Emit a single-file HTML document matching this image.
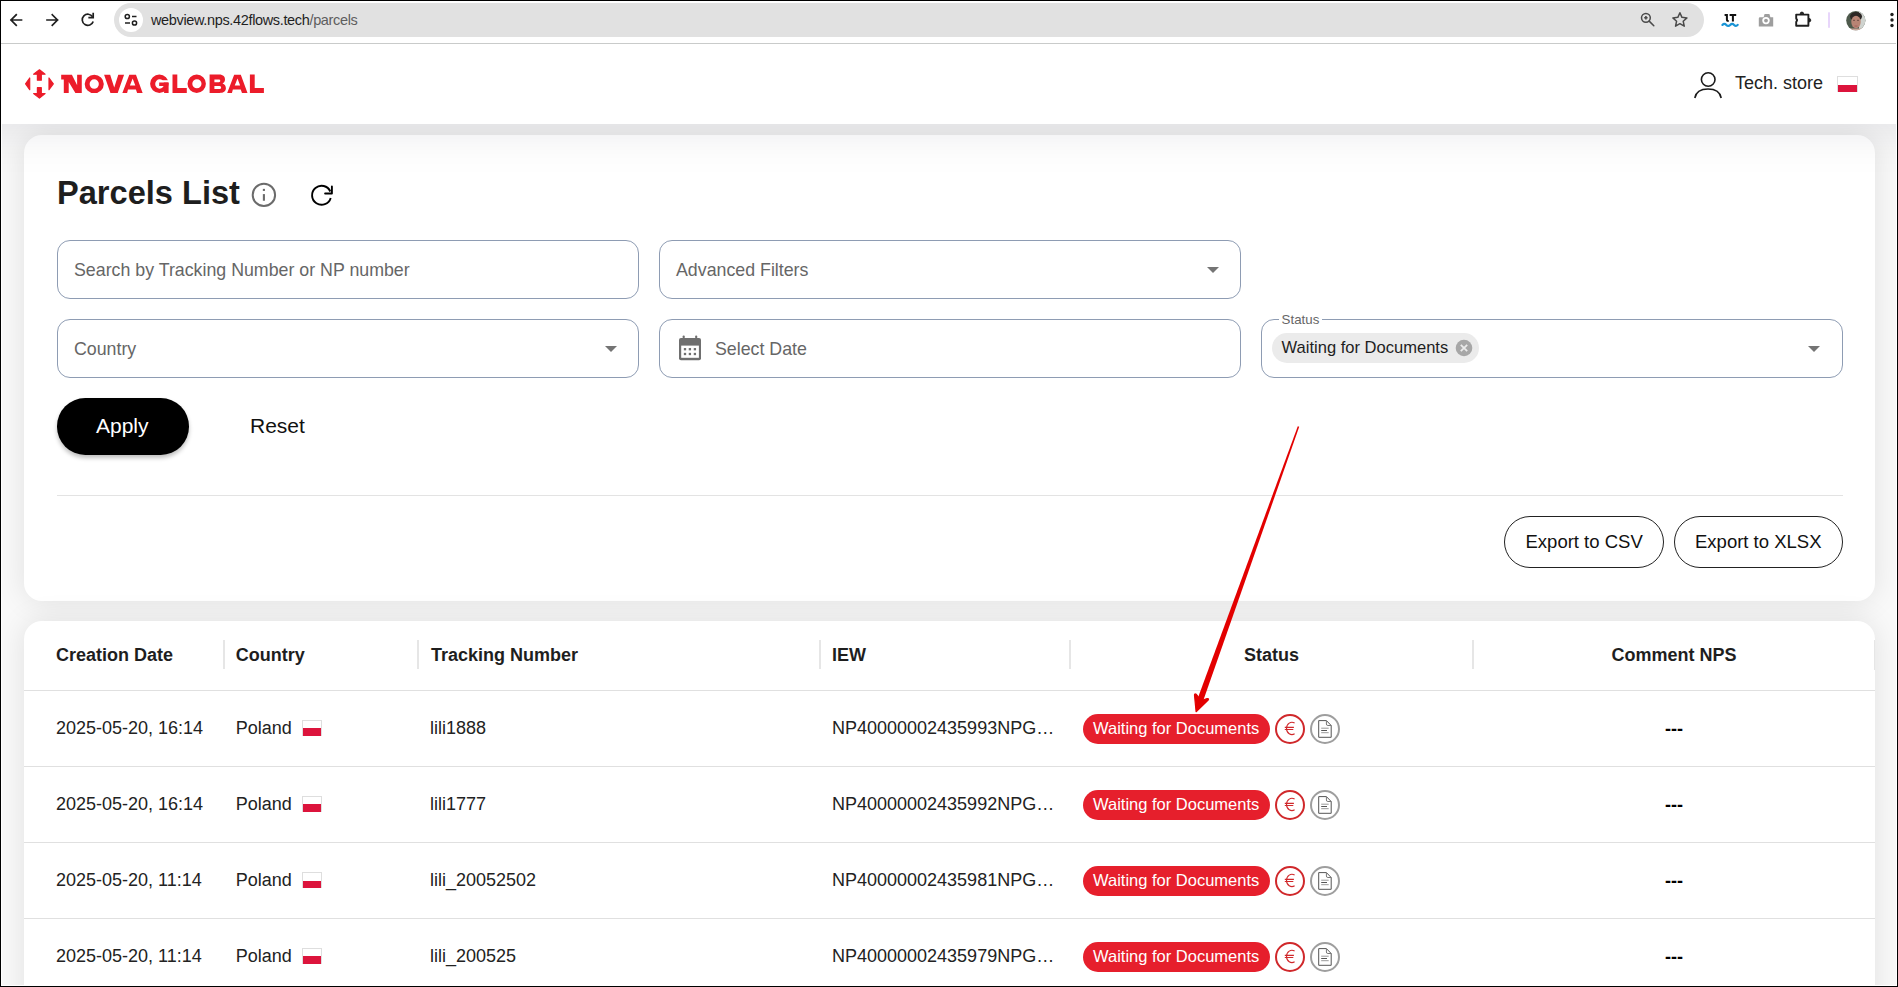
<!DOCTYPE html>
<html>
<head>
<meta charset="utf-8">
<style>
*{box-sizing:border-box;margin:0;padding:0}
html,body{width:1898px;height:987px;overflow:hidden;background:#fff}
body{font-family:"Liberation Sans",sans-serif;position:relative}
.a{position:absolute}
.t{position:absolute;white-space:nowrap;line-height:1}
.inp{position:absolute;border:1px solid #8e9cb3;border-radius:13px;background:#fff}
.ph{position:absolute;white-space:nowrap;line-height:1;font-size:17.8px;color:#666}
.hd{position:absolute;white-space:nowrap;line-height:1;font-size:18px;font-weight:700;color:#1e1e1e}
.cell{position:absolute;white-space:nowrap;line-height:1;font-size:18px;color:#222}
.sep{position:absolute;width:2px;height:29px;background:#e6e6e6;top:640px}
.rl{position:absolute;left:24px;width:1851px;height:1px;background:#e0e0e0}
.badge{position:absolute;left:1083px;width:187px;height:30px;border-radius:15px;background:#e61f2c;color:#fff;font-size:16.5px;line-height:1}
.euro{position:absolute;left:1275px;width:30px;height:30px;border-radius:15px;border:2.4px solid #d0282b}
.doc{position:absolute;left:1310px;width:30px;height:30px;border-radius:15px;border:2.4px solid #9e9e9e}
</style>
</head>
<body>
  <!-- ============ browser toolbar ============ -->
  <div class="a" style="left:0;top:43px;width:1898px;height:1px;background:#c9cbca"></div>
  <svg class="a" style="left:0;top:0" width="110" height="40" viewBox="0 0 110 40">
    <g fill="none" stroke="#1f1f1f" stroke-width="1.7" stroke-linecap="square">
      <path d="M11 20 H21.5 M16.2 14.8 L11 20 L16.2 25.2"/>
      <path d="M47 20 H57.5 M52.3 14.8 L57.5 20 L52.3 25.2"/>
    </g>
    <g fill="none" stroke="#1f1f1f" stroke-width="1.7">
      <path d="M92.6 16.8 A5.6 5.6 0 1 0 93.2 21.5"/>
      <path d="M93.2 13.6 V17.6 H89.2" stroke-linecap="square"/>
    </g>
  </svg>
  <div class="a" style="left:114px;top:3px;width:1590px;height:34px;border-radius:17px;background:#e1e1e1"></div>
  <div class="a" style="left:119px;top:8px;width:24px;height:24px;border-radius:12px;background:#fff"></div>
  <svg class="a" style="left:119px;top:8px" width="24" height="24" viewBox="0 0 24 24">
    <g fill="none" stroke="#1f1f1f" stroke-width="1.5">
      <circle cx="8.3" cy="8.5" r="2.1"/>
      <path d="M13 8.5 H17.5"/>
      <path d="M6 15 H11"/>
      <circle cx="15.5" cy="15" r="2.1"/>
    </g>
  </svg>
  <div class="t" style="left:151px;top:12.5px;font-size:14.5px;letter-spacing:-0.35px;color:#1f1f1f">webview.nps.42flows.tech<span style="color:#5e5e5e">/parcels</span></div>
  <svg class="a" style="left:1630px;top:0" width="268" height="40" viewBox="0 0 268 40">
    <g fill="none" stroke="#4a4a4a" stroke-width="1.5">
      <circle cx="15.9" cy="17.8" r="4.4"/>
      <path d="M19.2 21.1 L23.8 25.7" stroke-linecap="round"/>
      <path d="M15.9 16.1 V19.5 M14.2 17.8 H17.6" stroke-width="1.6"/>
    </g>
    <path d="M49.90 12.80 L51.96 17.37 L56.94 17.91 L53.23 21.28 L54.25 26.19 L49.90 23.70 L45.55 26.19 L46.57 21.28 L42.86 17.91 L47.84 17.37 Z" fill="none" stroke="#4a4a4a" stroke-width="1.5" stroke-linejoin="round"/>
    <path d="M94.6 15.1 H96.9 V19.6 Q96.9 21.1 98.7 21.1 M99.6 15.1 H106.2 M102.9 15.1 V21.4" fill="none" stroke="#111" stroke-width="2"/>
    <path d="M92.4 24.9 q1.95 -2.1 3.9 0 t3.9 0 t3.9 0 t3.6 0" fill="none" stroke="#1b95d6" stroke-width="2.2" stroke-linecap="round"/>
    <path d="M130 17.2 H133.6 L134.6 14 H139.4 L140.4 17.2 H143.2 V26.5 H128.8 V18.4 Q128.8 17.2 130 17.2 Z" fill="#9e9e9e"/>
    <circle cx="136" cy="20.6" r="3.7" fill="#fff"/>
    <circle cx="136" cy="20.6" r="1.9" fill="#9e9e9e"/>
    <path d="M166.2 14.6 H178.4 V25.8 H166.2 V21.9 Q167.9 20.2 166.2 18.5 Z" fill="none" stroke="#1f1f1f" stroke-width="1.9" stroke-linejoin="round"/>
    <path d="M170.2 13.8 A1.7 1.7 0 0 1 173.6 13.8 Z" fill="#1f1f1f" stroke="#1f1f1f" stroke-width="1"/>
    <path d="M179 18.4 A1.8 1.8 0 0 1 179 22 Z" fill="#1f1f1f" stroke="#1f1f1f" stroke-width="0.8"/>
    <rect x="198.2" y="12.3" width="1.6" height="15.5" fill="#e3cdfb"/>
    <circle cx="262" cy="14.5" r="1.7" fill="#1f1f1f"/><circle cx="262" cy="20" r="1.7" fill="#1f1f1f"/><circle cx="262" cy="25.5" r="1.7" fill="#1f1f1f"/>
  </svg>
  <svg class="a" style="left:1846px;top:11px" width="20" height="20" viewBox="0 0 20 20">
    <defs><clipPath id="avc"><circle cx="9.8" cy="9.6" r="9.6"/></clipPath></defs>
    <g clip-path="url(#avc)">
      <rect width="20" height="20" fill="#4e5a4c"/>
      <rect x="13" y="0" width="7" height="20" fill="#cfd3cf"/>
      <ellipse cx="10" cy="5.5" rx="6" ry="4.5" fill="#2b2624"/>
      <ellipse cx="10" cy="11" rx="4.7" ry="6.2" fill="#b88474"/>
      <rect x="7" y="8.8" width="2" height="1" fill="#6d4b44"/><rect x="11" y="8.8" width="2" height="1" fill="#6d4b44"/>
      <rect x="8.5" y="14.6" width="3" height="0.9" fill="#a45b5b"/>
      <rect x="4" y="17.5" width="12" height="3" fill="#c9a79b"/>
    </g>
  </svg>

  <!-- ============ page ============ -->
  <div class="a" style="left:2px;top:44px;width:1894px;height:941px;background:#f9f9f9;overflow:hidden">
    <!-- card 1 -->
    <div class="a" style="left:22px;top:91px;width:1851px;height:466px;border-radius:18px;background:#fff;box-shadow:0 0 30px rgba(0,0,0,0.1)"></div>
    <!-- card 2 -->
    <div class="a" style="left:22px;top:577px;width:1851px;height:600px;border-radius:18px;background:#fff;box-shadow:0 0 30px rgba(0,0,0,0.1)"></div>
    <!-- header -->
    <div class="a" style="left:-100px;top:0;width:2100px;height:80px;background:#fff;box-shadow:0 5px 50px rgba(10,10,40,0.1)"></div>
  </div>

  <!-- logo -->
  <svg class="a" style="left:20px;top:64px" width="40" height="40" viewBox="0 0 40 40">
    <g fill="#ec1c2a" stroke="#ec1c2a" stroke-width="1.2" stroke-linejoin="round">
      <path d="M19.45 5.8 L25.1 10.15 H21.3 V16.2 H17.4 V10.15 H13.6 Z"/>
      <path d="M19.45 34.15 L25.1 29.6 H21.3 V23.7 H17.4 V29.6 H13.6 Z"/>
      <path d="M5.6 19.85 L9.7 14 V25.7 Z"/>
      <path d="M33.3 19.85 L29 14 V25.7 Z"/>
    </g>
  </svg>
  <svg class="a" style="left:0;top:0" width="300" height="120" viewBox="0 0 300 120">
    <g fill="#ec1c2a" fill-rule="evenodd">
      <path d="M61.19 74.84 L71.91 74.84 L77.13 85.2 L77.13 74.84 L81.77 74.84 L81.77 93.04 L75.39 93.04 L68.72 81.91 L68.72 93.04 L63.8 93.04 L63.8 79.59 L61.19 79.59 Z"/>
      <path d="M103.8 83.9 A9.55 9.2 0 1 1 84.7 83.9 A9.55 9.2 0 1 1 103.8 83.9 Z M98.85 84.05 A4.62 4.72 0 1 0 89.61 84.05 A4.62 4.72 0 1 0 98.85 84.05 Z"/>
      <path d="M104.09 74.84 L110.17 74.84 L114.23 87.6 L118.29 74.84 L124.09 74.84 L117.71 93.04 L110.46 93.04 Z"/>
      <path d="M122.35 93.04 L129.30 74.84 L135.97 74.84 L142.64 93.04 L137.13 93.04 L135.90 89.45 L128.00 89.45 L127.10 93.04 Z M129.90 85.60 L132.65 78.60 L135.30 85.60 Z"/>
      <path d="M227.20 93.04 L234.15 74.84 L240.82 74.84 L247.49 93.04 L241.98 93.04 L240.75 89.45 L232.85 89.45 L231.95 93.04 Z M234.75 85.60 L237.50 78.60 L240.15 85.60 Z"/>
      <path d="M168.6 83.75 A9.25 9.15 0 1 1 150.1 83.75 A9.25 9.15 0 1 1 168.6 83.75 Z M164.1 84 A4.45 4.75 0 1 0 155.2 84 A4.45 4.75 0 1 0 164.1 84 Z"/>
      <path d="M172.5 74.6 H177.3 V88.1 H186.8 V92.9 H172.5 Z"/>
      <path d="M205.9 83.75 A9.2 9.15 0 1 1 187.5 83.75 A9.2 9.15 0 1 1 205.9 83.75 Z M201.5 83.8 A4.6 4.5 0 1 0 192.3 83.8 A4.6 4.5 0 1 0 201.5 83.8 Z"/>
      <path d="M209.6 74.6 H219 C223.5 74.6 225 77 225 79.5 C225 81.5 224 82.8 222.5 83.5 C224.8 84.3 225.9 86 225.9 88.2 C225.9 91.2 223.5 92.9 219.5 92.9 H209.6 Z M214.4 79.4 H218.8 C219.9 79.4 220.3 80.1 220.3 80.85 C220.3 81.6 219.9 82.3 218.8 82.3 H214.4 Z M214.4 85.9 H219.5 C220.7 85.9 221.1 86.7 221.1 87.5 C221.1 88.3 220.7 89.1 219.5 89.1 H214.4 Z"/>
      <path d="M249.9 74.6 H254.7 V88.1 H263.9 V92.9 H249.9 Z"/>
    </g>
    <rect x="160.5" y="80.2" width="10" height="2.3" fill="#fff"/>
    <path d="M159.2 82.5 H168.6 V92.9 H164.1 V86.1 H159.2 Z" fill="#ec1c2a"/>
  </svg>

  <!-- user -->
  <svg class="a" style="left:1690px;top:68px" width="36" height="34" viewBox="0 0 36 34">
    <g fill="none" stroke="#1a1a1a" stroke-width="1.6">
      <circle cx="18.2" cy="11.5" r="6.8"/>
      <path d="M4.8 30 C6 23.5 11 21 18 21 C25 21 30 23.5 31.2 30"/>
    </g>
  </svg>
  <div class="t" style="left:1735px;top:73.8px;font-size:18px;color:#222">Tech. store</div>
  <div class="a" style="left:1836.5px;top:76.3px;width:21px;height:15.3px;border:1px solid #dedede;border-bottom:none;background:linear-gradient(#fff 0,#fff 50%,#dc143c 50%)"></div>


  <!-- ============ card 1 content ============ -->
  <div class="t" style="left:57px;top:177.4px;font-size:32.6px;font-weight:700;color:#1e1e1e">Parcels List</div>
  <svg class="a" style="left:250px;top:181px" width="28" height="28" viewBox="0 0 28 28">
    <circle cx="13.9" cy="13.9" r="11.2" fill="none" stroke="#6b6b6b" stroke-width="2"/>
    <rect x="12.85" y="7.85" width="2.1" height="2.1" fill="#6b6b6b"/>
    <rect x="12.85" y="13.1" width="2.1" height="6.65" fill="#6b6b6b"/>
  </svg>
  <svg class="a" style="left:306px;top:180px" width="32" height="32" viewBox="0 0 32 32">
    <g fill="none" stroke="#000" stroke-width="1.9">
      <path d="M24.3 11.5 A9.5 9.5 0 1 0 24.7 17.9"/>
      <path d="M25.9 6.5 V13.5 H19.1" stroke-linecap="round" stroke-linejoin="round"/>
    </g>
  </svg>

  <div class="inp" style="left:57px;top:240px;width:582px;height:59px"></div>
  <div class="ph" style="left:74px;top:261.9px">Search by Tracking Number or NP number</div>
  <div class="inp" style="left:659px;top:240px;width:582px;height:59px"></div>
  <div class="ph" style="left:676px;top:261.9px">Advanced Filters</div>
  <svg class="a" style="left:1205px;top:265px" width="16" height="10" viewBox="0 0 16 10"><path d="M2 2 H14 L8 8 Z" fill="#747474"/></svg>

  <div class="inp" style="left:57px;top:319px;width:582px;height:59px"></div>
  <div class="ph" style="left:74px;top:340.9px">Country</div>
  <svg class="a" style="left:603px;top:344px" width="16" height="10" viewBox="0 0 16 10"><path d="M2 2 H14 L8 8 Z" fill="#747474"/></svg>

  <div class="inp" style="left:659px;top:319px;width:582px;height:59px"></div>
  <svg class="a" style="left:676px;top:333px" width="28" height="30" viewBox="0 0 28 30">
    <rect x="3" y="5" width="22" height="22.2" rx="2" fill="#6f6f6f"/>
    <rect x="6.7" y="2.5" width="2" height="4" rx="0.8" fill="#6f6f6f"/><rect x="19.2" y="2.5" width="2" height="4" rx="0.8" fill="#6f6f6f"/>
    <rect x="5.2" y="12.6" width="17.7" height="12.2" fill="#fff"/>
    <g fill="#6f6f6f">
      <rect x="7.85" y="15.05" width="2.3" height="2.3"/><rect x="12.75" y="15.05" width="2.3" height="2.3"/><rect x="17.75" y="15.05" width="2.3" height="2.3"/>
      <rect x="7.85" y="19.85" width="2.3" height="2.3"/><rect x="12.75" y="19.85" width="2.3" height="2.3"/><rect x="17.75" y="19.85" width="2.3" height="2.3"/>
    </g>
  </svg>
  <div class="ph" style="left:715px;top:340.9px">Select Date</div>

  <div class="inp" style="left:1261px;top:319px;width:582px;height:59px"></div>
  <div class="a" style="left:1279px;top:316px;width:43px;height:6px;background:#fff"></div>
  <div class="t" style="left:1281.6px;top:312.5px;font-size:13.3px;color:#666">Status</div>
  <div class="a" style="left:1272px;top:333px;width:207px;height:30px;border-radius:15px;background:#ebebeb"></div>
  <div class="t" style="left:1281.6px;top:339.7px;font-size:16.55px;color:#1e1e1e">Waiting for Documents</div>
  <svg class="a" style="left:1455px;top:339px" width="18" height="18" viewBox="0 0 18 18">
    <circle cx="9" cy="9" r="8.3" fill="#a7a7a7"/>
    <path d="M5.8 5.8 L12.2 12.2 M12.2 5.8 L5.8 12.2" stroke="#ebebeb" stroke-width="1.8"/>
  </svg>
  <svg class="a" style="left:1806px;top:344px" width="16" height="10" viewBox="0 0 16 10"><path d="M2 2 H14 L8 8 Z" fill="#747474"/></svg>

  <div class="a" style="left:57px;top:398px;width:132px;height:56.5px;border-radius:28.25px;background:#000;box-shadow:0 3px 4px rgba(0,0,0,0.25)"></div>
  <div class="t" style="left:96px;top:415.2px;font-size:21px;color:#fff">Apply</div>
  <div class="t" style="left:250px;top:415.2px;font-size:21px;color:#111">Reset</div>

  <div class="a" style="left:57px;top:495px;width:1786px;height:1px;background:#e3e3e3"></div>

  <div class="a" style="left:1504px;top:516px;width:160px;height:52px;border-radius:26px;border:1.3px solid #222"></div>
  <div class="t" style="left:1525.5px;top:532.7px;font-size:18.5px;color:#111">Export to CSV</div>
  <div class="a" style="left:1674px;top:516px;width:169px;height:52px;border-radius:26px;border:1.3px solid #222"></div>
  <div class="t" style="left:1695px;top:532.7px;font-size:18.5px;color:#111">Export to XLSX</div>

  <!-- ============ table ============ -->
  <div class="hd" style="left:56px;top:645.6px">Creation Date</div>
  <div class="sep" style="left:223px"></div>
  <div class="hd" style="left:235.8px;top:645.6px">Country</div>
  <div class="sep" style="left:417px"></div>
  <div class="hd" style="left:431px;top:645.6px">Tracking Number</div>
  <div class="sep" style="left:819px"></div>
  <div class="hd" style="left:832px;top:645.6px">IEW</div>
  <div class="sep" style="left:1069px"></div>
  <div class="hd" style="left:1070px;width:403px;text-align:center;top:645.6px">Status</div>
  <div class="sep" style="left:1472px"></div>
  <div class="hd" style="left:1473px;width:402px;text-align:center;top:645.6px">Comment NPS</div>
  <div class="rl" style="top:690px"></div>

  <div class="cell" style="left:56px;top:718.8px">2025-05-20, 16:14</div>
  <div class="cell" style="left:235.8px;top:718.8px">Poland</div>
  <div class="a" style="left:302.2px;top:720.1px;width:19.5px;height:15.5px;border:1px solid #dedede;border-bottom:none;background:linear-gradient(#fff 0,#fff 50%,#dc143c 50%)"></div>
  <div class="cell" style="left:430px;top:718.8px">lili1888</div>
  <div class="cell" style="left:832px;top:718.8px;width:224px;overflow:hidden;text-overflow:ellipsis">NP40000002435993NPGNPGLOBAL</div>
  <div class="badge" style="top:714px"><span class="t" style="left:10px;top:5.9px">Waiting for Documents</span></div>
  <div class="euro" style="top:714px"><svg class="a" style="left:-2.4px;top:-2.4px" width="30" height="30" viewBox="0 0 30 30"><g fill="none" stroke="#d0282b" stroke-width="1.15"><path d="M19.6 9.1 A5.4 6.1 0 1 0 19.6 19.7"/><path d="M9.8 13.4 H18.9 M9.8 15.5 H18.3"/></g></svg></div>
  <div class="doc" style="top:714px"><svg class="a" style="left:-2.4px;top:-2.4px" width="30" height="30" viewBox="0 0 30 30"><g fill="none" stroke="#555" stroke-width="1"><path d="M8.7 6.6 H16.4 L21.2 11.5 V23.3 H8.7 Z"/><path d="M16.4 6.6 V10 Q16.4 11.5 17.9 11.5 H21.2" stroke="#777"/></g><path d="M11.2 14.2 H18.7 M11.2 18.7 H18.7" stroke="#999" stroke-width="1"/><path d="M11.2 16.5 H17" stroke="#555" stroke-width="1"/></svg></div>
  <div class="cell" style="left:1473px;width:402px;text-align:center;top:719.8px;color:#000;font-weight:700">---</div>
  <div class="rl" style="top:766px"></div>

  <div class="cell" style="left:56px;top:794.8px">2025-05-20, 16:14</div>
  <div class="cell" style="left:235.8px;top:794.8px">Poland</div>
  <div class="a" style="left:302.2px;top:796.1px;width:19.5px;height:15.5px;border:1px solid #dedede;border-bottom:none;background:linear-gradient(#fff 0,#fff 50%,#dc143c 50%)"></div>
  <div class="cell" style="left:430px;top:794.8px">lili1777</div>
  <div class="cell" style="left:832px;top:794.8px;width:224px;overflow:hidden;text-overflow:ellipsis">NP40000002435992NPGNPGLOBAL</div>
  <div class="badge" style="top:790px"><span class="t" style="left:10px;top:5.9px">Waiting for Documents</span></div>
  <div class="euro" style="top:790px"><svg class="a" style="left:-2.4px;top:-2.4px" width="30" height="30" viewBox="0 0 30 30"><g fill="none" stroke="#d0282b" stroke-width="1.15"><path d="M19.6 9.1 A5.4 6.1 0 1 0 19.6 19.7"/><path d="M9.8 13.4 H18.9 M9.8 15.5 H18.3"/></g></svg></div>
  <div class="doc" style="top:790px"><svg class="a" style="left:-2.4px;top:-2.4px" width="30" height="30" viewBox="0 0 30 30"><g fill="none" stroke="#555" stroke-width="1"><path d="M8.7 6.6 H16.4 L21.2 11.5 V23.3 H8.7 Z"/><path d="M16.4 6.6 V10 Q16.4 11.5 17.9 11.5 H21.2" stroke="#777"/></g><path d="M11.2 14.2 H18.7 M11.2 18.7 H18.7" stroke="#999" stroke-width="1"/><path d="M11.2 16.5 H17" stroke="#555" stroke-width="1"/></svg></div>
  <div class="cell" style="left:1473px;width:402px;text-align:center;top:795.8px;color:#000;font-weight:700">---</div>
  <div class="rl" style="top:842px"></div>

  <div class="cell" style="left:56px;top:870.8px">2025-05-20, 11:14</div>
  <div class="cell" style="left:235.8px;top:870.8px">Poland</div>
  <div class="a" style="left:302.2px;top:872.1px;width:19.5px;height:15.5px;border:1px solid #dedede;border-bottom:none;background:linear-gradient(#fff 0,#fff 50%,#dc143c 50%)"></div>
  <div class="cell" style="left:430px;top:870.8px">lili_20052502</div>
  <div class="cell" style="left:832px;top:870.8px;width:224px;overflow:hidden;text-overflow:ellipsis">NP40000002435981NPGNPGLOBAL</div>
  <div class="badge" style="top:866px"><span class="t" style="left:10px;top:5.9px">Waiting for Documents</span></div>
  <div class="euro" style="top:866px"><svg class="a" style="left:-2.4px;top:-2.4px" width="30" height="30" viewBox="0 0 30 30"><g fill="none" stroke="#d0282b" stroke-width="1.15"><path d="M19.6 9.1 A5.4 6.1 0 1 0 19.6 19.7"/><path d="M9.8 13.4 H18.9 M9.8 15.5 H18.3"/></g></svg></div>
  <div class="doc" style="top:866px"><svg class="a" style="left:-2.4px;top:-2.4px" width="30" height="30" viewBox="0 0 30 30"><g fill="none" stroke="#555" stroke-width="1"><path d="M8.7 6.6 H16.4 L21.2 11.5 V23.3 H8.7 Z"/><path d="M16.4 6.6 V10 Q16.4 11.5 17.9 11.5 H21.2" stroke="#777"/></g><path d="M11.2 14.2 H18.7 M11.2 18.7 H18.7" stroke="#999" stroke-width="1"/><path d="M11.2 16.5 H17" stroke="#555" stroke-width="1"/></svg></div>
  <div class="cell" style="left:1473px;width:402px;text-align:center;top:871.8px;color:#000;font-weight:700">---</div>
  <div class="rl" style="top:918px"></div>

  <div class="cell" style="left:56px;top:946.8px">2025-05-20, 11:14</div>
  <div class="cell" style="left:235.8px;top:946.8px">Poland</div>
  <div class="a" style="left:302.2px;top:948.1px;width:19.5px;height:15.5px;border:1px solid #dedede;border-bottom:none;background:linear-gradient(#fff 0,#fff 50%,#dc143c 50%)"></div>
  <div class="cell" style="left:430px;top:946.8px">lili_200525</div>
  <div class="cell" style="left:832px;top:946.8px;width:224px;overflow:hidden;text-overflow:ellipsis">NP40000002435979NPGNPGLOBAL</div>
  <div class="badge" style="top:942px"><span class="t" style="left:10px;top:5.9px">Waiting for Documents</span></div>
  <div class="euro" style="top:942px"><svg class="a" style="left:-2.4px;top:-2.4px" width="30" height="30" viewBox="0 0 30 30"><g fill="none" stroke="#d0282b" stroke-width="1.15"><path d="M19.6 9.1 A5.4 6.1 0 1 0 19.6 19.7"/><path d="M9.8 13.4 H18.9 M9.8 15.5 H18.3"/></g></svg></div>
  <div class="doc" style="top:942px"><svg class="a" style="left:-2.4px;top:-2.4px" width="30" height="30" viewBox="0 0 30 30"><g fill="none" stroke="#555" stroke-width="1"><path d="M8.7 6.6 H16.4 L21.2 11.5 V23.3 H8.7 Z"/><path d="M16.4 6.6 V10 Q16.4 11.5 17.9 11.5 H21.2" stroke="#777"/></g><path d="M11.2 14.2 H18.7 M11.2 18.7 H18.7" stroke="#999" stroke-width="1"/><path d="M11.2 16.5 H17" stroke="#555" stroke-width="1"/></svg></div>
  <div class="cell" style="left:1473px;width:402px;text-align:center;top:947.8px;color:#000;font-weight:700">---</div>
  <div class="rl" style="top:994px"></div>

  <!-- annotation arrow -->
  <svg class="a" style="left:0;top:0;overflow:visible" width="1898" height="987" viewBox="0 0 1898 987">
    <polygon points="1297.79,426.25 1196.32,702.22 1201.96,704.24 1299.21,426.75" fill="#e30000"/>
    <path d="M1196.1 711.7 L1194.5 695.2 Q1194.3 693.2 1196.3 694.3 L1201.2 700.6 L1207.2 698.5 Q1209.3 698.3 1208.2 700 Z" fill="#e30000" stroke="#e30000" stroke-width="1.2" stroke-linejoin="round"/>
  </svg>
  <!-- window frame -->
  <div class="a" style="left:0;top:0;width:1898px;height:1px;background:#000"></div>
  <div class="a" style="left:0;top:0;width:1px;height:987px;background:#000"></div>
  <div class="a" style="left:1897px;top:0;width:1px;height:987px;background:#000"></div>
  <div class="a" style="left:0;top:986px;width:1898px;height:1px;background:#000"></div>
  <div class="a" style="left:1px;top:985px;width:1896px;height:1px;background:#fff"></div>
  <div class="a" style="left:1px;top:44px;width:1px;height:941px;background:#fff"></div>
  <div class="a" style="left:1896px;top:1px;width:1px;height:985px;background:#fff"></div>
  <div class="a" style="left:1874px;top:640px;width:1px;height:30px;background:#e6e6e6"></div>
</body>
</html>
